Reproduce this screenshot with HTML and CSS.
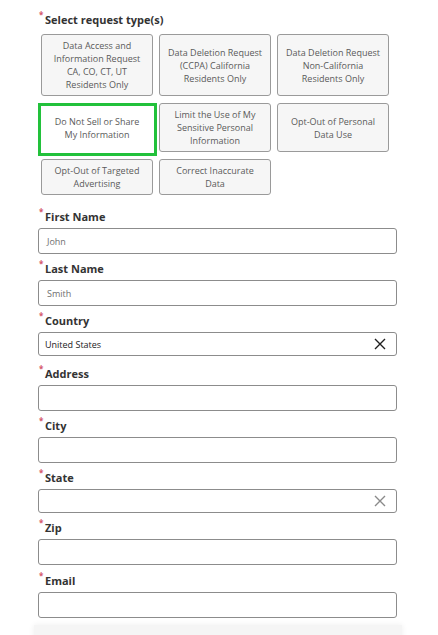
FILE: index.html
```html
<!DOCTYPE html>
<html lang="en">
<head>
<meta charset="utf-8">
<title>Request form</title>
<link rel="stylesheet" href="styles.css">
</head>
<body>
<form class="form">
  <div class="label top-label"><span class="req">*</span><span>Select request type(s)</span></div>
  <div class="types">
    <div class="type">Data Access and<br>Information Request<br>CA, CO, CT, UT<br>Residents Only</div>
    <div class="type">Data Deletion Request<br>(CCPA) California<br>Residents Only</div>
    <div class="type">Data Deletion Request<br>Non-California<br>Residents Only</div>
    <div class="type selected">Do Not Sell or Share<br>My Information</div>
    <div class="type">Limit the Use of My<br>Sensitive Personal<br>Information</div>
    <div class="type">Opt-Out of Personal<br>Data Use</div>
    <div class="type">Opt-Out of Targeted<br>Advertising</div>
    <div class="type">Correct Inaccurate<br>Data</div>
  </div>

  <div class="field first">
    <div class="label"><span class="req">*</span><span>First Name</span></div>
    <div class="input"><span class="ph">John</span></div>
  </div>
  <div class="field">
    <div class="label"><span class="req">*</span><span>Last Name</span></div>
    <div class="input"><span class="ph">Smith</span></div>
  </div>
  <div class="field country">
    <div class="label"><span class="req">*</span><span>Country</span></div>
    <div class="input select"><span class="val">United States</span>
      <svg class="clear" width="12" height="12" viewBox="0 0 12 12"><path d="M1 1 L11 11 M11 1 L1 11" stroke="#1f1f1f" stroke-width="1.4" fill="none"/></svg>
    </div>
  </div>
  <div class="field">
    <div class="label"><span class="req">*</span><span>Address</span></div>
    <div class="input"></div>
  </div>
  <div class="field">
    <div class="label"><span class="req">*</span><span>City</span></div>
    <div class="input"></div>
  </div>
  <div class="field">
    <div class="label"><span class="req">*</span><span>State</span></div>
    <div class="input select"><span class="val"></span>
      <svg class="clear" width="12" height="12" viewBox="0 0 12 12"><path d="M1 1 L11 11 M11 1 L1 11" stroke="#8a8a8a" stroke-width="1.4" fill="none"/></svg>
    </div>
  </div>
  <div class="field">
    <div class="label"><span class="req">*</span><span>Zip</span></div>
    <div class="input"></div>
  </div>
  <div class="field email">
    <div class="label"><span class="req">*</span><span>Email</span></div>
    <div class="input"></div>
  </div>
  <div class="panel"></div>
</form>
</body>
</html>
```
FILE: styles.css
```css
html, body {
  margin: 0;
  padding: 0;
  background: #ffffff;
}
body {
  font-family: "Open Sans", "Liberation Sans", sans-serif;
  color: #333;
  overflow: hidden;
  height: 635px;
}
.form {
  width: 359px;
  padding: 12px 0 0 38px;
  display: flex;
  flex-direction: column;
}
.label {
  display: flex;
  align-items: flex-start;
  height: 16px;
  line-height: 16px;
  font-size: 11px;
  font-weight: 700;
  color: #333;
}
.req {
  color: #d4566a;
  font-size: 8px;
  line-height: 8px;
  width: 7px;
  margin-top: -1px;
  padding-left: 1px;
  box-sizing: border-box;
}
.types {
  margin: 6px 0 0 3px;
  display: grid;
  grid-template-columns: 112px 112px 112px;
  column-gap: 6px;
  row-gap: 7px;
}
.type {
  position: relative;
  display: flex;
  align-items: center;
  justify-content: center;
  text-align: center;
  padding: 4px 2px;
  border: 1px solid #9a9a9a;
  border-radius: 3px;
  background: #f6f6f6;
  color: #5a5a5a;
  font-size: 9px;
  line-height: 13px;
  white-space: nowrap;
}
.type.selected {
  background: #ffffff;
  border-color: transparent;
}
.type.selected::after {
  content: "";
  position: absolute;
  top: -1px;
  left: -4px;
  right: -5px;
  bottom: -5px;
  border: 3px solid #22c13b;
}
.field {
  margin-top: 7px;
  display: flex;
  flex-direction: column;
}
.field.first {
  margin-top: 14px;
}
.field.country {
  margin-bottom: 3px;
}
.field.email {
  margin-top: 8px;
}
.field .input {
  margin-top: 3px;
}
.input {
  box-sizing: border-box;
  height: 26px;
  border: 1px solid #8c8c8c;
  border-radius: 3px;
  background: #fff;
  display: flex;
  align-items: center;
  padding: 0 7px;
  font-size: 9px;
}
.input.select {
  height: 24px;
  justify-content: space-between;
  padding: 0 10px 0 6px;
}
.ph {
  color: #6f6f6f;
  padding-left: 1px;
}
.val {
  color: #222;
}
.clear {
  display: block;
}
.panel {
  margin: 7px 0 0 -4px;
  width: 368px;
  height: 30px;
  background: #f5f5f5;
  box-shadow: 0 0 6px rgba(0, 0, 0, 0.07);
}
```
